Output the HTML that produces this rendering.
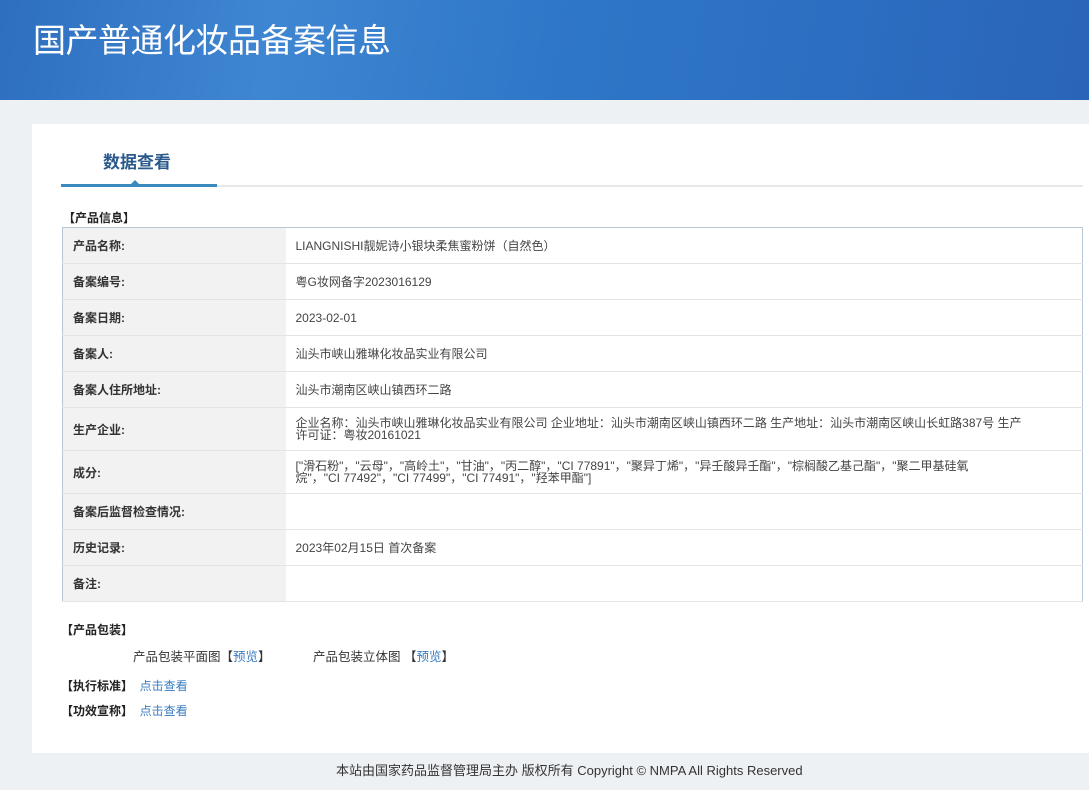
<!DOCTYPE html>
<html><head><meta charset="utf-8"><style>
*{margin:0;padding:0;box-sizing:border-box}
body{width:1089px;height:790px;overflow:hidden;background:#eef1f4;font-family:"Liberation Sans","Noto Sans CJK SC",sans-serif;font-size:12px;color:#333;position:relative}
.hd{position:absolute;left:0;top:0;width:1089px;height:100px;background:linear-gradient(100deg,#2e6fc0 0%,#3f86d2 25%,#2f77c8 50%,#2c6fc2 75%,#2a64b8 100%)}
.hd h1{position:absolute;left:33px;top:14px;font-size:33px;font-weight:normal;color:#fff;letter-spacing:-0.5px}
.card{position:absolute;left:32px;top:124px;width:1057px;height:629px;background:#fff}
.tab{position:absolute;left:71px;top:24px;font-size:17px;font-weight:bold;color:#2a5a8c}
.ln{position:absolute;left:29px;top:61px;width:1022px;height:2px;background:#e6e8ea}
.ln2{position:absolute;left:29px;top:60px;width:156px;height:3px;background:#3a8ac0}
.tri{position:absolute;left:98px;top:56px;width:0;height:0;border-left:5px solid transparent;border-right:5px solid transparent;border-bottom:5px solid #3a8ac0}
.sec{position:absolute;font-weight:bold;font-size:12px;color:#222}
table{position:absolute;left:30px;top:103px;width:1021px;border-collapse:collapse;border:1px solid #b7c7d6}
td{border-bottom:1px solid #e4e4e4;height:36px;padding:0 10px;vertical-align:middle;font-size:12px}
td.l{width:223px;background:#f2f2f2;font-weight:bold;color:#333;font-size:12px}
td.v{color:#444;line-height:12px}
.a{color:#3a7cc0}
.ft{position:absolute;top:760px;left:336px;white-space:nowrap;font-size:13px;color:#333}
</style></head><body>
<div class="hd"><h1>国产普通化妆品备案信息</h1></div>
<div class="card">
<div class="tab">数据查看</div>
<div class="ln"></div><div class="ln2"></div><div class="tri"></div>
<div class="sec" style="left:31px;top:85px">【产品信息】</div>
<table>
<tr><td class="l">产品名称:</td><td class="v">LIANGNISHI靓妮诗小银块柔焦蜜粉饼（自然色）</td></tr>
<tr><td class="l">备案编号:</td><td class="v">粤G妆网备字2023016129</td></tr>
<tr><td class="l">备案日期:</td><td class="v">2023-02-01</td></tr>
<tr><td class="l">备案人:</td><td class="v">汕头市峡山雅琳化妆品实业有限公司</td></tr>
<tr><td class="l">备案人住所地址:</td><td class="v">汕头市潮南区峡山镇西环二路</td></tr>
<tr><td class="l" style="height:43px">生产企业:</td><td class="v">企业名称：汕头市峡山雅琳化妆品实业有限公司 企业地址：汕头市潮南区峡山镇西环二路 生产地址：汕头市潮南区峡山长虹路387号 生产<br>许可证：粤妆20161021</td></tr>
<tr><td class="l" style="height:43px">成分:</td><td class="v">["滑石粉"，"云母"，"高岭土"，"甘油"，"丙二醇"，"CI 77891"，"聚异丁烯"，"异壬酸异壬酯"，"棕榈酸乙基己酯"，"聚二甲基硅氧<br>烷"，"CI 77492"，"CI 77499"，"CI 77491"，"羟苯甲酯"]</td></tr>
<tr><td class="l">备案后监督检查情况:</td><td class="v"></td></tr>
<tr><td class="l">历史记录:</td><td class="v">2023年02月15日 首次备案</td></tr>
<tr><td class="l">备注:</td><td class="v"></td></tr>
</table>
<div class="sec" style="left:29px;top:497px">【产品包装】</div>
<div style="position:absolute;left:101px;top:522px;font-size:12.5px">产品包装平面图【<span class="a">预览</span>】</div>
<div style="position:absolute;left:281px;top:522px;font-size:12.5px">产品包装立体图 【<span class="a">预览</span>】</div>
<div class="sec" style="left:29px;top:553px">【执行标准】 &nbsp;<span class="a" style="font-weight:normal">点击查看</span></div>
<div class="sec" style="left:29px;top:578px">【功效宣称】 &nbsp;<span class="a" style="font-weight:normal">点击查看</span></div>
</div>
<div class="ft">本站由国家药品监督管理局主办 版权所有 Copyright © NMPA All Rights Reserved</div>
</body></html>
